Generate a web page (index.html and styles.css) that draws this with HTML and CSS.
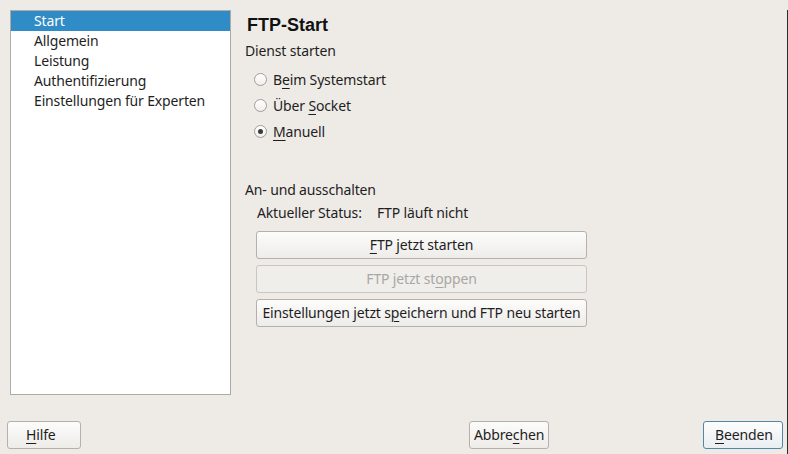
FILE: index.html
```html
<!DOCTYPE html>
<html lang="de">
<head>
<meta charset="utf-8">
<title>FTP-Start</title>
<link rel="stylesheet" href="styles.css">
</head>
<body>
<div class="window">
  <div class="main">
    <ul class="nav">
      <li class="sel">Start</li>
      <li>Allgemein</li>
      <li>Leistung</li>
      <li>Authentifizierung</li>
      <li>Einstellungen für Experten</li>
    </ul>
    <div class="content">
      <h1 class="title">FTP-Start</h1>
      <div class="label">Dienst starten</div>
      <div class="radios">
        <div class="radio"><span class="circle"></span><span>B<u>e</u>im Systemstart</span></div>
        <div class="radio"><span class="circle"></span><span>Über <u>S</u>ocket</span></div>
        <div class="radio"><span class="circle on"></span><span><u>M</u>anuell</span></div>
      </div>
      <div class="label section">An- und ausschalten</div>
      <div class="status"><span class="status-key">Aktueller Status:</span><span>FTP läuft nicht</span></div>
      <div class="actions">
        <button class="btn wide"><u>F</u>TP jetzt starten</button>
        <button class="btn wide disabled">FTP jetzt st<u>o</u>ppen</button>
        <button class="btn wide">Einstellungen jetzt s<u>p</u>eichern und FTP neu starten</button>
      </div>
    </div>
  </div>
  <div class="footer">
    <button class="btn foot help"><u>H</u>ilfe</button>
    <button class="btn foot cancel">Abbre<u>c</u>hen</button>
    <button class="btn foot primary"><u>B</u>eenden</button>
  </div>
</div>
</body>
</html>
```
FILE: styles.css
```css
* { box-sizing: border-box; }
html, body {
  margin: 0;
  padding: 0;
  width: 788px;
  height: 454px;
  overflow: hidden;
  background: #eeebe7;
  font-family: "Noto Sans", sans-serif;
  font-size: 14px;
  letter-spacing: -0.15px;
  color: #1e1e1e;
}
.window {
  position: relative;
  width: 788px;
  height: 454px;
}
.window::after {
  content: "";
  position: absolute;
  right: 0;
  top: 10px;
  bottom: 0;
  width: 1px;
  background: #1f3230;
}
.main {
  display: flex;
  padding: 10px 0 0 10px;
  height: 411px;
}
.nav {
  list-style: none;
  margin: 0;
  padding: 0;
  width: 221px;
  height: 385px;
  background: #ffffff;
  border: 1px solid #aeaaa5;
}
.nav li {
  height: 20px;
  line-height: 20px;
  padding-left: 23px;
  white-space: nowrap;
}
.nav li.sel {
  background: #308cc6;
  color: #ffffff;
}
.content {
  padding-left: 14px;
}
.title {
  margin: 4px 0 0 2px;
  font-family: "Liberation Sans", Arial, sans-serif;
  font-weight: bold;
  font-size: 18px;
  letter-spacing: 0;
  line-height: 22px;
  color: #111;
}
.label {
  margin-top: 5px;
  line-height: 20px;
}
.radios {
  margin-top: 5px;
  padding-left: 9px;
}
.radio {
  display: flex;
  align-items: center;
  height: 26px;
  gap: 6px;
}
.circle {
  width: 13px;
  height: 13px;
  border-radius: 50%;
  border: 1px solid #a19d98;
  background: linear-gradient(#ffffff, #f1efec);
  display: flex;
  align-items: center;
  justify-content: center;
}
.circle.on::after {
  content: "";
  width: 5px;
  height: 5px;
  border-radius: 50%;
  background: #3a3a3a;
}
u {
  text-decoration: underline;
  text-decoration-thickness: 1px;
  text-underline-offset: 3px;
}
.section {
  margin-top: 36px;
}
.status {
  display: flex;
  padding-left: 12px;
  margin-top: 3px;
  line-height: 20px;
}
.status-key {
  width: 120px;
}
.actions {
  display: flex;
  flex-direction: column;
  gap: 6px;
  margin-top: 8px;
  padding-left: 11px;
}
.btn {
  font-family: "Noto Sans", sans-serif;
  font-size: 14px;
  letter-spacing: -0.15px;
  color: #1e1e1e;
  height: 28px;
  padding: 0 0 2px 0;
  border: 1px solid #b4b0ab;
  border-radius: 3px;
  background: linear-gradient(#fcfcfb, #eeece9);
  cursor: default;
}
.btn.wide {
  width: 331px;
}
.btn.disabled {
  color: #a9a7a4;
  background: #f0eeeb;
  border-color: #c9c6c2;
}
.footer {
  display: flex;
  align-items: center;
  padding: 10px 5px 0 7px;
}
.btn.foot {
  width: 74px;
  text-align: left;
}
.btn.help {
  padding-left: 18px;
}
.btn.cancel {
  width: 80px;
  margin-left: auto;
  padding-left: 4px;
}
.btn.primary {
  width: 80px;
  margin-left: 154px;
  padding-left: 11px;
  border-color: #4f86a9;
  background: linear-gradient(#fdfdfd, #e9eef2);
}
```
